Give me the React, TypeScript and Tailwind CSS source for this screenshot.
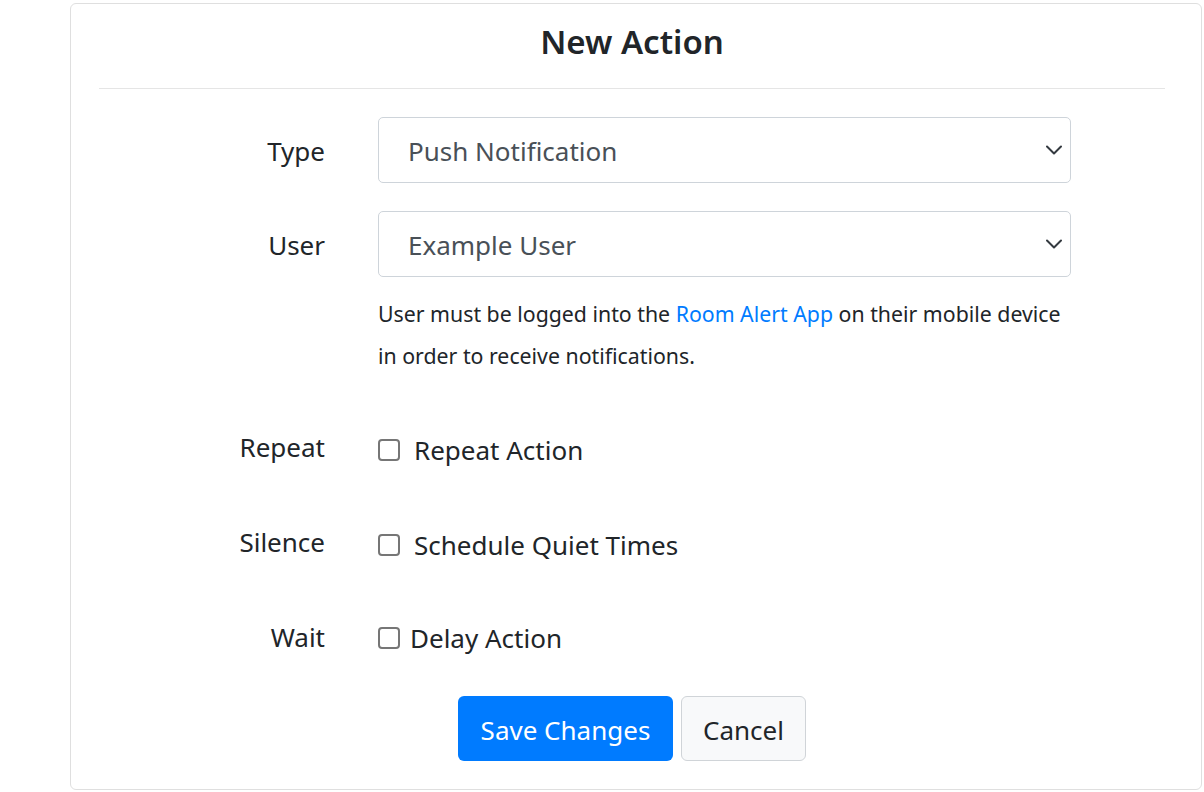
import React from "react";

const font = { fontFamily: '"Noto Sans", "Open Sans", sans-serif' };

function Select({ value }: { value: string }) {
  return (
    <div className="relative w-[693px] h-[66px] border border-[#ced4da] rounded-[5px] bg-white flex items-center pl-[29px] text-[26px] text-[#495057]">
      <span className="mt-[3px]">{value}</span>
      <div className="absolute right-[8px] top-0 bottom-0 w-[16px] flex items-center">
        <svg width="16" height="10" viewBox="0 0 16 10">
          <polyline points="1,1.5 8,8.5 15,1.5" fill="none" stroke="#343a40" strokeWidth="2" strokeLinecap="round" strokeLinejoin="round" />
        </svg>
      </div>
    </div>
  );
}

function Check({ label, gap }: { label: string; gap: string }) {
  return (
    <div className={`flex items-center ${gap}`}>
      <div className="w-[22px] h-[22px] border-2 border-[#767676] rounded-[4px] bg-white shrink-0" />
      <span className="text-[26px] text-[#212529] leading-none">{label}</span>
    </div>
  );
}

function Row({ label, children, labelOffset = "" }: { label: string; children: React.ReactNode; labelOffset?: string }) {
  return (
    <div className="flex items-center">
      <div className={`w-[226px] text-right text-[26px] text-[#212529] leading-none ${labelOffset}`}>{label}</div>
      <div className="ml-[53px]">{children}</div>
    </div>
  );
}

export default function App() {
  return (
    <div className="w-[1204px] h-[792px] bg-white overflow-hidden" style={font}>
      <div className="ml-[70px] mt-[3px] w-[1132px] h-[787px] border border-[#dfdfdf] rounded-[6px] bg-white">
        <div className="ml-[28px] w-[1066px]">
          <div className="h-[85px] flex items-center justify-center border-b border-[#e5e5e5]">
            <h1 className="text-[33px] font-semibold text-[#212529] leading-none mt-[-9px]">New Action</h1>
          </div>
          <div className="mt-[28px]">
            <Row label="Type" labelOffset="mt-[2px]">
              <Select value="Push Notification" />
            </Row>
            <div className="mt-[28px]">
              <Row label="User" labelOffset="mt-[2px]">
                <Select value="Example User" />
              </Row>
            </div>
            <p className="ml-[279px] mt-[16px] text-[21.3px] leading-[42px] text-[#212529] w-[694px]">
              User must be logged into the <a className="text-[#007bff]">Room Alert App</a> on their mobile device in order to receive notifications.
            </p>
            <div className="mt-[60px] h-[30px]">
              <Row label="Repeat" labelOffset="-mt-[6px]">
                <Check label="Repeat Action" gap="gap-[14px]" />
              </Row>
            </div>
            <div className="mt-[65px] h-[30px]">
              <Row label="Silence" labelOffset="-mt-[6px]">
                <Check label="Schedule Quiet Times" gap="gap-[14px]" />
              </Row>
            </div>
            <div className="mt-[63px] h-[30px]">
              <Row label="Wait" labelOffset="-mt-[3px]">
                <Check label="Delay Action" gap="gap-[10px]" />
              </Row>
            </div>
            <div className="mt-[41px] flex justify-center gap-[8px]">
              <button className="h-[65px] w-[215px] rounded-[6px] bg-[#007bff] text-white text-[26px] pt-[3px]">Save Changes</button>
              <button className="h-[65px] w-[125px] rounded-[6px] bg-[#f8f9fa] border border-[#d0d4d8] text-[#212529] text-[26px] pt-[3px]">Cancel</button>
            </div>
          </div>
        </div>
      </div>
    </div>
  );
}
